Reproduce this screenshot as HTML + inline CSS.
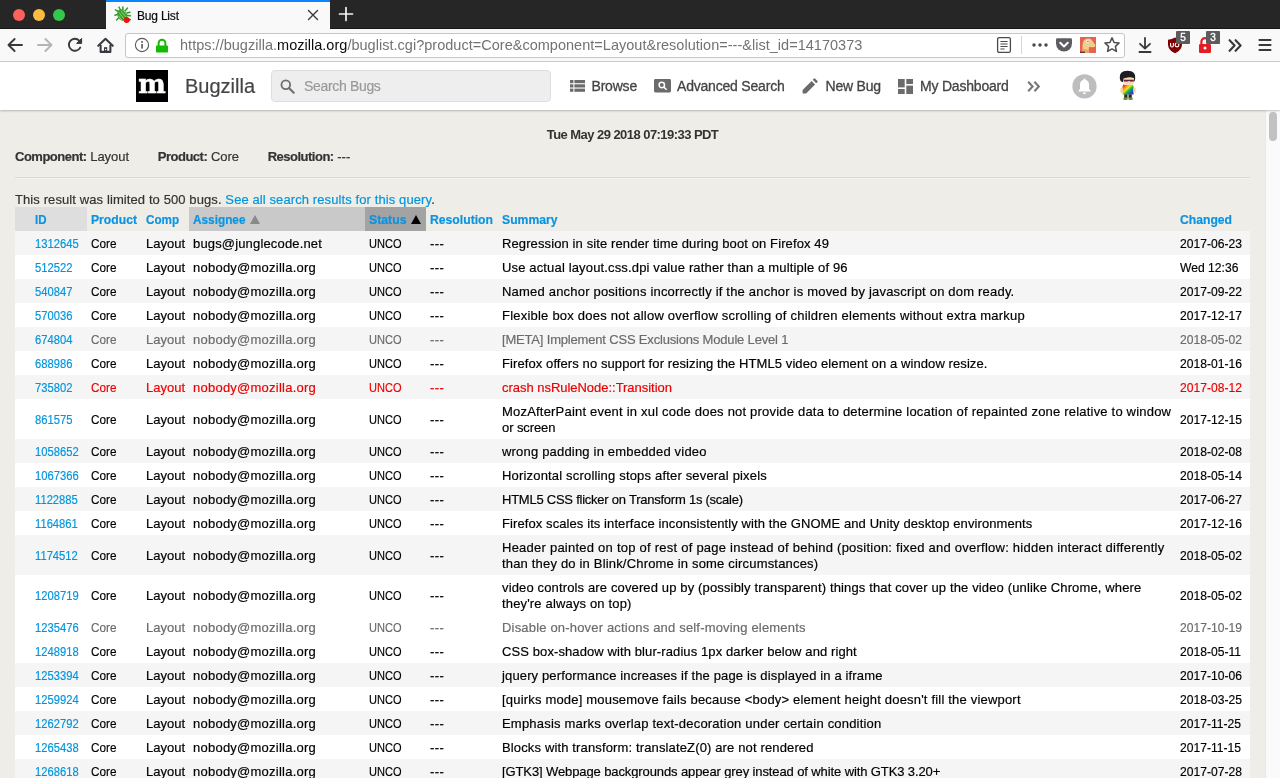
<!DOCTYPE html>
<html lang="en"><head><meta charset="utf-8"><title>Bug List</title>
<style>
*{box-sizing:border-box;margin:0;padding:0}
html,body{width:1280px;height:778px;overflow:hidden}
body{position:relative;background:#eeede7;font-family:"Liberation Sans",sans-serif;font-size:13px;color:#000}
.abs{position:absolute}
/* ---------- browser chrome ---------- */
#titlebar{position:absolute;left:0;top:0;width:1280px;height:29px;background:#262627;box-shadow:inset 0 -1px #161617}
.tl{position:absolute;top:8.5px;width:12px;height:12px;border-radius:50%}
#tab{position:absolute;left:106px;top:0;width:224px;height:29px;background:#f9f9fa;border-top:2px solid #0a84ff}
#tab .t{position:absolute;left:31px;top:7px;font-size:12px;color:#0c0c0d;letter-spacing:-.2px}
#navbar{position:absolute;left:0;top:29px;width:1280px;height:33px;background:#f9f9fa;border-bottom:1px solid #cfcfd1}
#urlbar{position:absolute;left:125px;top:3.5px;width:1000px;height:25px;background:#fff;border:1px solid #c6c6c8;border-radius:3px}
#url{position:absolute;left:54px;top:3px;font-size:14.5px;line-height:17px;color:#737373;white-space:nowrap;letter-spacing:.02px}
#url b{font-weight:400;color:#0c0c0d}
.badge{position:absolute;top:2px;width:14px;height:13px;background:#5b5b5e;color:#fff;font-size:10px;line-height:13px;text-align:center;border-radius:1px;-webkit-text-stroke:.35px}
/* ---------- bugzilla header ---------- */
#hdr{z-index:2;position:absolute;left:0;top:62px;width:1280px;height:48px;background:#fff;box-shadow:0 1px 2px rgba(0,0,0,.24)}
#logo{position:absolute;left:136px;top:8px;width:32px;height:32px;background:#000;overflow:hidden}
#logo span{position:absolute;left:0;width:32px;top:-2px;text-align:center;font-family:"DejaVu Serif","Liberation Serif",serif;font-weight:700;font-size:26px;line-height:32px;color:#fff;-webkit-text-stroke:.5px #fff}
#bz{position:absolute;left:185px;top:12px;font-size:20px;line-height:24px;color:#444}
#search{position:absolute;left:271px;top:8px;width:280px;height:32px;background:#eee;border:1px solid #ddd;border-radius:4px}
#search span{position:absolute;left:32px;top:7px;font-size:14px;line-height:16px;color:#999;letter-spacing:-.33px}
.nav{position:absolute;top:16px;font-size:14px;line-height:16px;color:#444;white-space:nowrap;letter-spacing:-.2px}
/* ---------- page ---------- */
#time{position:absolute;left:0;width:1265px;top:127px;text-align:center;font-weight:700;font-size:13px;line-height:16px;color:#333;letter-spacing:-.55px}
#crit{position:absolute;left:15px;top:149px;font-size:13px;line-height:16px;color:#333;white-space:nowrap}
#crit b{letter-spacing:-.5px}
#hr{position:absolute;left:15px;top:177px;width:1235px;height:2px;background:linear-gradient(#dbd9d3 50%,#f4f3ef 50%)}
#lim{position:absolute;left:15px;top:192px;font-size:13px;line-height:16px;color:#333;white-space:nowrap;letter-spacing:.1px}
a{color:#0095dd;text-decoration:none}
table{position:absolute;left:15px;top:207px;width:1235px;border-collapse:collapse;table-layout:fixed}
td,th{padding:5px 4px 3px 4px;line-height:16px;font-size:13px;text-align:left;vertical-align:middle;white-space:nowrap;overflow:visible}
th{color:#0a94e2;font-weight:700;-webkit-text-stroke:.2px}
th span{display:inline-block;transform-origin:0 50%;vertical-align:top}
th i{display:inline-block;width:0;height:0;border-left:5px solid transparent;border-right:5px solid transparent;border-bottom:9px solid #888;vertical-align:top;margin-top:3px}
td.s{white-space:normal}
.nav{-webkit-text-stroke:.3px !important}
td,#lim,#crit,.nav,#bz,#search span,#tab .t{-webkit-text-stroke:.18px}
td span,td a{display:inline-block;transform-origin:0 50%;vertical-align:top}
td.s span{display:inline;white-space:nowrap}
.n{transform:scaleX(.862)}
.co{transform:scaleX(.905)}
.un{transform:scaleX(.85)}
.d{transform:scaleX(.932)}
.an{letter-spacing:.24px}
.aj{letter-spacing:.16px}
.da{letter-spacing:.4px}
tr.o{background:#f5f5f5}
tr.e{background:#fff}
tr.g td{color:#6b6b6b}
tr.r td{color:#e00}
tr td:first-child,tr th:first-child{padding-left:19.5px}
th.h1{background:#dedede}
th.h2{background:#c9c9c9}
th.h3{background:#a3a3a3}
#sb{position:absolute;left:1265px;top:110px;width:15px;height:668px;background:#fafafa;border-left:1px solid #e8e8e8}
#sb i{position:absolute;left:3px;top:2px;width:8px;height:29px;border-radius:4px;background:#c1c1c1}
#root{position:absolute;left:0;top:0;width:1280px;height:778px;overflow:hidden;will-change:transform}
</style></head><body>
<div id="root">

<div id="titlebar">
 <div class="tl" style="left:13px;background:#fc615d"></div>
 <div class="tl" style="left:33px;background:#fdbc40"></div>
 <div class="tl" style="left:53px;background:#34c84a"></div>
 <div id="tab">
  <svg class="abs" style="left:8px;top:4px" width="19" height="18" viewBox="0 0 19 18">
   <g stroke="#2f9e2a" stroke-width="1.5" fill="none" stroke-linecap="round"><path d="M4.500 5.500 L1.500 3.800M6.500 4 L5 1.200M9 3.500 L8.800 .900M11.500 4.500 L13.500 2M13 7 L16 6.200M3.500 8.500 L1 9.200M4.500 12 L2.600 14M13.500 9.500 L16.400 9.800"/></g>
   <ellipse cx="8.200" cy="9" rx="4.800" ry="6" transform="rotate(-32 8.200 9)" fill="#36a32f"/>
   <path d="M5 6.500 L10.500 13.500M7 4.800 L12 11M9.300 4 L12.600 8.200M4.200 9.500 L7.800 14" stroke="#cfd9a0" stroke-width=".8" fill="none" opacity=".8"/>
   <circle cx="12.600" cy="14" r="2.900" fill="#f0100c"/>
   <path d="M13.500 12 L17.300 13.200 L14.500 16z" fill="#f0100c"/>
  </svg>
  <span class="t">Bug List</span>
  <svg class="abs" style="left:201px;top:7px" width="12" height="12" viewBox="0 0 12 12"><path d="M1.5 1.5 L10.5 10.5M10.5 1.5 L1.5 10.5" stroke="#3a3a3e" stroke-width="1.4" stroke-linecap="round"/></svg>
 </div>
 <svg class="abs" style="left:338px;top:6px" width="16" height="16" viewBox="0 0 16 16"><path d="M8 1.5 V14.5M1.5 8 H14.5" stroke="#f4f4f5" stroke-width="1.7" stroke-linecap="round"/></svg>
</div>
<div id="navbar">
 <svg class="abs" style="left:7px;top:8px" width="16" height="16" viewBox="0 0 16 16"><path d="M15 8 H1.8M7.6 2 L1.5 8 L7.6 14" fill="none" stroke="#38383d" stroke-width="1.9" stroke-linecap="round" stroke-linejoin="round"/></svg>
 <svg class="abs" style="left:37px;top:8px" width="16" height="16" viewBox="0 0 16 16"><path d="M1 8 H14.2M8.4 2 L14.5 8 L8.4 14" fill="none" stroke="#b4b4b7" stroke-width="1.9" stroke-linecap="round" stroke-linejoin="round"/></svg>
 <svg class="abs" style="left:67px;top:8px" width="17" height="16" viewBox="0 0 17 16"><path d="M13.2 10.6 A6 6 0 1 1 12.2 3.6" fill="none" stroke="#38383d" stroke-width="1.9" stroke-linecap="round"/><path d="M14.6 1.4 V6.4 H9.6z" fill="#38383d" stroke="#38383d" stroke-width="1" stroke-linejoin="round"/></svg>
 <svg class="abs" style="left:96.500px;top:7.500px" width="17" height="17" viewBox="0 0 16 16"><path d="M1.2 8.2 L8 1.6 L14.8 8.2" fill="none" stroke="#38383d" stroke-width="1.9" stroke-linecap="round" stroke-linejoin="round"/><path d="M3.4 7.6 V14 H12.6 V7.6" fill="none" stroke="#38383d" stroke-width="1.9" stroke-linejoin="round"/><rect x="6.6" y="9.6" width="3" height="4.4" fill="#38383d"/><rect x="7.5" y="11.2" width="1.2" height="1.2" fill="#f9f9fa"/></svg>
 <div id="urlbar">
  <svg class="abs" style="left:8px;top:3.500px" width="16" height="16" viewBox="0 0 16 16"><circle cx="8" cy="8" r="6.600" fill="none" stroke="#5a5a5e" stroke-width="1.1"/><rect x="7.3" y="7" width="1.5" height="4.6" fill="#4a4a4f"/><circle cx="8.05" cy="4.9" r=".95" fill="#4a4a4f"/></svg>
  <svg class="abs" style="left:29px;top:4.700px" width="14" height="16" viewBox="0 0 14 16"><path d="M3.6 8 V5.2 A3.4 3.4 0 0 1 10.4 5.2 V8" fill="none" stroke="#12bc00" stroke-width="2"/><rect x="1" y="7.4" width="12" height="7.2" rx=".8" fill="#12bc00"/></svg>
  <svg class="abs" style="left:870px;top:2px" width="16" height="18" viewBox="0 0 16 18"><rect x="1.6" y="1.6" width="12.8" height="14.8" rx="1.6" fill="none" stroke="#4a4a4f" stroke-width="1.3"/><path d="M4.4 5.5 H11.6M4.4 8 H11.6M4.4 10.5 H11.6M4.4 13 H8.6" stroke="#4a4a4f" stroke-width="1"/></svg>
  <div class="abs" style="left:895px;top:2.500px;width:1px;height:18px;background:#d7d7db"></div>
  <svg class="abs" style="left:905px;top:8px" width="18" height="6" viewBox="0 0 18 6"><circle cx="3" cy="3" r="1.75" fill="#4a4a4f"/><circle cx="9" cy="3" r="1.75" fill="#4a4a4f"/><circle cx="15" cy="3" r="1.75" fill="#4a4a4f"/></svg>
  <svg class="abs" style="left:929px;top:3px" width="18" height="16" viewBox="0 0 18 16"><path d="M1 2.4 Q1 1.2 2.4 1.2 H15.6 Q17 1.2 17 2.4 V6.5 A8 8 0 0 1 1 6.5z" fill="#5c5c61"/><path d="M5.2 5.8 L9 9.4 L12.8 5.8" fill="none" stroke="#fff" stroke-width="2" stroke-linecap="round" stroke-linejoin="round"/></svg>
  <svg class="abs" style="left:954px;top:3px" width="16" height="16" viewBox="0 0 16 16"><rect width="16" height="16" fill="#e8634e"/><path d="M2.5 16 V9 Q2.5 2 8 1.6 Q11 1.4 12.4 4 L15.4 8 Q15.6 10.4 12.6 10.2 L9 10 L8.6 16z" fill="#f3cd8c"/><path d="M2.5 16 V11 Q4.5 13 8.8 12.6 L8.6 16z" fill="#e0a96a"/><circle cx="7.6" cy="4.6" r="1.5" fill="#fff"/><circle cx="7.9" cy="4.5" r=".8" fill="#3b6fb5"/><rect x="0" y="14.6" width="5" height="1.4" fill="#7a2a22"/></svg>
  <svg class="abs" style="left:977px;top:2.400px" width="18" height="18" viewBox="0 0 18 18"><path d="M9 1.9 L11.1 6.5 L16.1 7 L12.4 10.4 L13.4 15.4 L9 12.9 L4.6 15.4 L5.6 10.4 L1.9 7 L6.9 6.5z" fill="none" stroke="#4a4a4f" stroke-width="1.5" stroke-linejoin="round"/></svg><div id="url">https://bugzilla.<b>mozilla.org</b>/buglist.cgi?product=Core&amp;component=Layout&amp;resolution=---&amp;list_id=14170373</div></div>
 <svg class="abs" style="left:1138px;top:8px" width="14" height="17" viewBox="0 0 14 17"><path d="M7 1 V11.4M2 6.8 L7 11.6 L12 6.8" fill="none" stroke="#38383d" stroke-width="1.8" stroke-linecap="round" stroke-linejoin="round"/><path d="M1.4 15 H12.6" stroke="#38383d" stroke-width="1.8" stroke-linecap="round"/></svg>
 <svg class="abs" style="left:1167px;top:8px" width="16" height="17" viewBox="0 0 16 17"><path d="M8 .6 Q11 2.6 15 2.8 V8 Q14.4 13.4 8 16.2 Q1.6 13.4 1 8 V2.8 Q5 2.6 8 .6z" fill="#800000"/><path d="M3.6 6 V8.6 Q3.6 10 5 10 Q6.4 10 6.4 8.6 V6" fill="none" stroke="#fff" stroke-width="1.1"/><circle cx="10" cy="8" r="1.9" fill="none" stroke="#fff" stroke-width="1.1"/></svg>
 <div class="badge" style="left:1176px">5</div>
 <svg class="abs" style="left:1198px;top:8px" width="14" height="17" viewBox="0 0 14 17"><path d="M3.4 8 V5 A3.5 3.5 0 0 1 10.4 4.4" fill="none" stroke="#e31b23" stroke-width="2.2"/><rect x="1" y="7" width="12" height="9" rx="1.2" fill="#e31b23"/><circle cx="7" cy="11" r="1.5" fill="#fff"/></svg>
 <div class="badge" style="left:1206px">3</div>
 <svg class="abs" style="left:1228px;top:10px" width="14" height="13" viewBox="0 0 14 13"><path d="M1.6 1.2 L6.6 6.5 L1.6 11.8M7.6 1.2 L12.6 6.5 L7.6 11.8" fill="none" stroke="#38383d" stroke-width="2.1" stroke-linecap="round" stroke-linejoin="round"/></svg>
 <svg class="abs" style="left:1258px;top:9px" width="14" height="14" viewBox="0 0 14 14"><path d="M1.4 2 H12.6M1.4 7 H12.6M1.4 12 H12.6" stroke="#38383d" stroke-width="1.9" stroke-linecap="round"/></svg>
</div>

<div id="hdr">
 <div id="logo"><span>m</span></div>
 <div id="bz">Bugzilla</div>
 <div id="search">
  <svg class="abs" style="left:6.500px;top:7px" width="17" height="17" viewBox="0 0 18 18"><circle cx="7.2" cy="7.2" r="4.6" fill="none" stroke="#6e6e6e" stroke-width="1.9"/><path d="M10.8 10.8 L15.6 15.6" stroke="#6e6e6e" stroke-width="2.2" stroke-linecap="round"/></svg>
  <span>Search Bugs</span></div>
 <svg class="abs" style="left:570px;top:18px" width="15" height="12" viewBox="0 0 15 12"><g fill="#6b6b6b"><rect x="0" y="0" width="3.4" height="3.2"/><rect x="4.4" y="0" width="10.6" height="3.2"/><rect x="0" y="4.3" width="3.4" height="3.2"/><rect x="4.4" y="4.3" width="10.6" height="3.2"/><rect x="0" y="8.6" width="3.4" height="3.2"/><rect x="4.4" y="8.6" width="10.6" height="3.2"/></g></svg>
 <div class="nav" style="left:591.5px">Browse</div>
 <svg class="abs" style="left:654px;top:17px" width="17" height="14" viewBox="0 0 17 14"><rect width="17" height="13.4" rx="1.4" fill="#6b6b6b"/><circle cx="7.8" cy="6" r="2.7" fill="none" stroke="#fff" stroke-width="1.5"/><path d="M9.8 8 L12.6 10.8" stroke="#fff" stroke-width="1.6"/></svg>
 <div class="nav" style="left:677px">Advanced Search</div>
 <svg class="abs" style="left:802px;top:16px" width="16" height="16" viewBox="0 0 16 16"><path d="M.6 15.4 V11.9 L9.6 2.9 L13.1 6.4 L4.1 15.4z M10.7 1.8 L12 .5 Q12.5 0 13 .5 L15.5 3 Q16 3.5 15.5 4 L14.2 5.3z" fill="#6b6b6b"/></svg>
 <div class="nav" style="left:825.5px">New Bug</div>
 <svg class="abs" style="left:897.5px;top:16.5px" width="15" height="15" viewBox="0 0 15 15"><g fill="#6b6b6b"><rect x="0" y="0" width="6.7" height="8.4"/><rect x="0" y="10" width="6.7" height="5"/><rect x="8.3" y="0" width="6.7" height="5"/><rect x="8.3" y="6.6" width="6.7" height="8.4"/></g></svg>
 <div class="nav" style="left:920px">My Dashboard</div>
 <svg class="abs" style="left:1027px;top:18.5px" width="14" height="11" viewBox="0 0 14 11"><path d="M1.2 .8 L5.6 5.5 L1.2 10.2M7.4 .8 L11.8 5.5 L7.4 10.2" fill="none" stroke="#777" stroke-width="2.1"/></svg>
 <svg class="abs" style="left:1071.5px;top:11.500px" width="25" height="25" viewBox="0 0 25 25"><circle cx="12.500" cy="12.400" r="12.100" fill="#bdbdbd"/><path d="M12.5 4.6 Q13.5 4.6 13.5 5.8 Q17 6.8 17 11 V15 L18.6 16.8 V17.6 H6.4 V16.8 L8 15 V11 Q8 6.8 11.5 5.8 Q11.5 4.6 12.5 4.6z M10.9 18.6 H14.1 Q14.1 20.2 12.5 20.2 Q10.9 20.2 10.9 18.6z" fill="#fff"/></svg>
 <svg class="abs" style="left:1117px;top:7px" width="22" height="33" viewBox="0 0 22 33">
  <defs><linearGradient id="rb" x1="0" y1="0" x2="1" y2="1"><stop offset=".08" stop-color="#e8261c"/><stop offset=".3" stop-color="#f7a51c"/><stop offset=".42" stop-color="#f2e11c"/><stop offset=".58" stop-color="#1fb834"/><stop offset=".78" stop-color="#1457d8"/><stop offset="1" stop-color="#3a2a9a"/></linearGradient></defs>
  <path d="M2.800 9.500 Q1.800 1.800 10.500 1.700 Q19.200 1.800 18.200 9.500 Q18 12.400 16.600 13 L16.800 9 Q12 8 8.500 9.500 L5.500 13.200 Q3 12.500 2.800 9.500z" fill="#1e1e22"/>
  <path d="M6.400 9.600 Q11 7.800 16.800 9 V13.600 Q16 16 12 16 Q7.500 16 6.400 13.200z" fill="#f3d9b4"/>
  <path d="M7 10.800 H16.800 V12.600 H13 L12 11.800 L11 12.600 H7z" fill="#6a1f35"/>
  <path d="M6.200 15.600 Q11 17 15.800 15.600 L16.600 18 V25.600 H5.400 V18z" fill="url(#rb)"/>
  <rect x="3.400" y="18.400" width="2.400" height="5.600" rx="1.200" fill="#f7cfa8"/>
  <rect x="16.200" y="18.400" width="2.400" height="5.600" rx="1.200" fill="#f7cfa8"/>
  <rect x="7.200" y="25.400" width="3.300" height="3.600" fill="#3a2420"/>
  <rect x="11.500" y="25.400" width="3.300" height="3.600" fill="#3a2420"/>
  <rect x="6.400" y="28.600" width="4.300" height="2.400" rx="1" fill="#5a9a3c"/>
  <rect x="11.400" y="28.600" width="4.300" height="2.400" rx="1" fill="#5a9a3c"/>
 </svg>
</div>

<div id="time">Tue May 29 2018 07:19:33 PDT</div>
<div id="crit"><b>Component:</b> Layout <b style="margin-left:25px">Product:</b> Core <b style="margin-left:25px">Resolution:</b> ---</div>
<div id="hr"></div>
<div id="lim">This result was limited to 500 bugs. <a>See all search results for this query</a>.</div>

<table>
<colgroup><col style="width:72px"><col style="width:55px"><col style="width:47px"><col style="width:176px"><col style="width:61px"><col style="width:72px"><col style="width:678px"><col style="width:74px"></colgroup>
<tr><th class="h1"><span style="transform:scaleX(.885)">ID</span></th><th><span style="transform:scaleX(.937)">Product</span></th><th><span style="transform:scaleX(.897)">Comp</span></th><th class="h2"><span style="transform:scaleX(.908)">Assignee</span><i style="margin-left:-1px"></i></th><th class="h3"><span style="transform:scaleX(.945)">Status</span><i style="border-bottom-color:#000;margin-left:2px"></i></th><th><span style="transform:scaleX(.938)">Resolution</span></th><th><span style="transform:scaleX(.938)">Summary</span></th><th><span style="transform:scaleX(.935)">Changed</span></th></tr>
<tr class="o"><td><a class="n">1312645</a></td><td><span class="co">Core</span></td><td>Layout</td><td class="aj">bugs@junglecode.net</td><td><span class="un">UNCO</span></td><td class="da">---</td><td class="s"><span style="letter-spacing:0.11px">Regression in site render time during boot on Firefox 49</span></td><td><span class="d">2017-06-23</span></td></tr>
<tr class="e"><td><a class="n">512522</a></td><td><span class="co">Core</span></td><td>Layout</td><td class="an">nobody@mozilla.org</td><td><span class="un">UNCO</span></td><td class="da">---</td><td class="s"><span style="letter-spacing:0.15px">Use actual layout.css.dpi value rather than a multiple of 96</span></td><td><span class="d">Wed 12:36</span></td></tr>
<tr class="o"><td><a class="n">540847</a></td><td><span class="co">Core</span></td><td>Layout</td><td class="an">nobody@mozilla.org</td><td><span class="un">UNCO</span></td><td class="da">---</td><td class="s"><span style="letter-spacing:0.20px">Named anchor positions incorrectly if the anchor is moved by javascript on dom ready.</span></td><td><span class="d">2017-09-22</span></td></tr>
<tr class="e"><td><a class="n">570036</a></td><td><span class="co">Core</span></td><td>Layout</td><td class="an">nobody@mozilla.org</td><td><span class="un">UNCO</span></td><td class="da">---</td><td class="s"><span style="letter-spacing:0.22px">Flexible box does not allow overflow scrolling of children elements without extra markup</span></td><td><span class="d">2017-12-17</span></td></tr>
<tr class="o g"><td><a class="n">674804</a></td><td><span class="co">Core</span></td><td>Layout</td><td class="an">nobody@mozilla.org</td><td><span class="un">UNCO</span></td><td class="da">---</td><td class="s"><span style="letter-spacing:-0.18px">[META] Implement CSS Exclusions Module Level 1</span></td><td><span class="d">2018-05-02</span></td></tr>
<tr class="e"><td><a class="n">688986</a></td><td><span class="co">Core</span></td><td>Layout</td><td class="an">nobody@mozilla.org</td><td><span class="un">UNCO</span></td><td class="da">---</td><td class="s"><span style="letter-spacing:0.09px">Firefox offers no support for resizing the HTML5 video element on a window resize.</span></td><td><span class="d">2018-01-16</span></td></tr>
<tr class="o r"><td><a class="n">735802</a></td><td><span class="co">Core</span></td><td>Layout</td><td class="an">nobody@mozilla.org</td><td><span class="un">UNCO</span></td><td class="da">---</td><td class="s"><span style="letter-spacing:-0.03px">crash nsRuleNode::Transition</span></td><td><span class="d">2017-08-12</span></td></tr>
<tr class="e"><td><a class="n">861575</a></td><td><span class="co">Core</span></td><td>Layout</td><td class="an">nobody@mozilla.org</td><td><span class="un">UNCO</span></td><td class="da">---</td><td class="s"><span style="letter-spacing:0.20px">MozAfterPaint event in xul code does not provide data to determine location of repainted zone relative to window</span><br><span style="letter-spacing:-0.09px">or screen</span></td><td><span class="d">2017-12-15</span></td></tr>
<tr class="o"><td><a class="n">1058652</a></td><td><span class="co">Core</span></td><td>Layout</td><td class="an">nobody@mozilla.org</td><td><span class="un">UNCO</span></td><td class="da">---</td><td class="s"><span style="letter-spacing:0.19px">wrong padding in embedded video</span></td><td><span class="d">2018-02-08</span></td></tr>
<tr class="e"><td><a class="n">1067366</a></td><td><span class="co">Core</span></td><td>Layout</td><td class="an">nobody@mozilla.org</td><td><span class="un">UNCO</span></td><td class="da">---</td><td class="s"><span style="letter-spacing:0.18px">Horizontal scrolling stops after several pixels</span></td><td><span class="d">2018-05-14</span></td></tr>
<tr class="o"><td><a class="n">1122885</a></td><td><span class="co">Core</span></td><td>Layout</td><td class="an">nobody@mozilla.org</td><td><span class="un">UNCO</span></td><td class="da">---</td><td class="s"><span style="letter-spacing:-0.24px">HTML5 CSS flicker on Transform 1s (scale)</span></td><td><span class="d">2017-06-27</span></td></tr>
<tr class="e"><td><a class="n">1164861</a></td><td><span class="co">Core</span></td><td>Layout</td><td class="an">nobody@mozilla.org</td><td><span class="un">UNCO</span></td><td class="da">---</td><td class="s"><span style="letter-spacing:0.09px">Firefox scales its interface inconsistently with the GNOME and Unity desktop environments</span></td><td><span class="d">2017-12-16</span></td></tr>
<tr class="o"><td><a class="n">1174512</a></td><td><span class="co">Core</span></td><td>Layout</td><td class="an">nobody@mozilla.org</td><td><span class="un">UNCO</span></td><td class="da">---</td><td class="s"><span style="letter-spacing:0.24px">Header painted on top of rest of page instead of behind (position: fixed and overflow: hidden interact differently</span><br><span style="letter-spacing:0.18px">than they do in Blink/Chrome in some circumstances)</span></td><td><span class="d">2018-05-02</span></td></tr>
<tr class="e"><td><a class="n">1208719</a></td><td><span class="co">Core</span></td><td>Layout</td><td class="an">nobody@mozilla.org</td><td><span class="un">UNCO</span></td><td class="da">---</td><td class="s"><span style="letter-spacing:0.14px">video controls are covered up by (possibly transparent) things that cover up the video (unlike Chrome, where</span><br><span style="letter-spacing:0.16px">they're always on top)</span></td><td><span class="d">2018-05-02</span></td></tr>
<tr class="e g"><td><a class="n">1235476</a></td><td><span class="co">Core</span></td><td>Layout</td><td class="an">nobody@mozilla.org</td><td><span class="un">UNCO</span></td><td class="da">---</td><td class="s"><span style="letter-spacing:0.18px">Disable on-hover actions and self-moving elements</span></td><td><span class="d">2017-10-19</span></td></tr>
<tr class="e"><td><a class="n">1248918</a></td><td><span class="co">Core</span></td><td>Layout</td><td class="an">nobody@mozilla.org</td><td><span class="un">UNCO</span></td><td class="da">---</td><td class="s"><span style="letter-spacing:0.10px">CSS box-shadow with blur-radius 1px darker below and right</span></td><td><span class="d">2018-05-11</span></td></tr>
<tr class="o"><td><a class="n">1253394</a></td><td><span class="co">Core</span></td><td>Layout</td><td class="an">nobody@mozilla.org</td><td><span class="un">UNCO</span></td><td class="da">---</td><td class="s"><span style="letter-spacing:0.14px">jquery performance increases if the page is displayed in a iframe</span></td><td><span class="d">2017-10-06</span></td></tr>
<tr class="e"><td><a class="n">1259924</a></td><td><span class="co">Core</span></td><td>Layout</td><td class="an">nobody@mozilla.org</td><td><span class="un">UNCO</span></td><td class="da">---</td><td class="s"><span style="letter-spacing:0.19px">[quirks mode] mousemove fails because &lt;body&gt; element height doesn't fill the viewport</span></td><td><span class="d">2018-03-25</span></td></tr>
<tr class="o"><td><a class="n">1262792</a></td><td><span class="co">Core</span></td><td>Layout</td><td class="an">nobody@mozilla.org</td><td><span class="un">UNCO</span></td><td class="da">---</td><td class="s"><span style="letter-spacing:0.20px">Emphasis marks overlap text-decoration under certain condition</span></td><td><span class="d">2017-11-25</span></td></tr>
<tr class="e"><td><a class="n">1265438</a></td><td><span class="co">Core</span></td><td>Layout</td><td class="an">nobody@mozilla.org</td><td><span class="un">UNCO</span></td><td class="da">---</td><td class="s"><span style="letter-spacing:0.14px">Blocks with transform: translateZ(0) are not rendered</span></td><td><span class="d">2017-11-15</span></td></tr>
<tr class="o"><td><a class="n">1268618</a></td><td><span class="co">Core</span></td><td>Layout</td><td class="an">nobody@mozilla.org</td><td><span class="un">UNCO</span></td><td class="da">---</td><td class="s"><span style="letter-spacing:-0.11px">[GTK3] Webpage backgrounds appear grey instead of white with GTK3 3.20+</span></td><td><span class="d">2017-07-28</span></td></tr>
</table>
<div id="sb"><i></i></div>
</div>
</body></html>
